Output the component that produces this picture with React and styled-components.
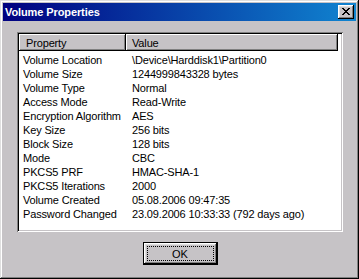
import React from "react";
import styled, { createGlobalStyle } from "styled-components";

const GlobalStyle = createGlobalStyle`
  html, body {
    margin: 0;
    padding: 0;
    background: #c6c3c6;
  }
  * {
    box-sizing: border-box;
  }
`;

const face = "#c6c3c6";

// 창 프레임
const Window = styled.div`
  width: 359px;
  height: 279px;
  padding: 3px;
  background: ${face};
  display: flex;
  flex-direction: column;
  font-family: "Liberation Sans", Arial, sans-serif;
  font-size: 11px;
  color: #000;
  box-shadow: inset -1px -1px #000, inset 1px 1px #dfdfdf,
    inset -2px -2px #808080, inset 2px 2px #fff;
`;

// 제목 표시줄
const TitleBar = styled.div`
  height: 18px;
  display: flex;
  align-items: center;
  padding: 0 2px 0 2px;
  background: linear-gradient(to right, #000080, #1084d0);
`;

const Title = styled.span`
  color: #fff;
  font-weight: 700;
  font-size: 11px;
  line-height: 18px;
  letter-spacing: -0.1px;
`;

const CloseButton = styled.div`
  margin-left: auto;
  width: 16px;
  height: 14px;
  background: ${face};
  display: flex;
  align-items: center;
  justify-content: center;
  box-shadow: inset -1px -1px #000, inset 1px 1px #fff,
    inset -2px -2px #808080, inset 2px 2px #dfdfdf;

  svg {
    display: block;
    margin: 0 0 1px 0;
  }
`;

const Body = styled.div`
  flex: 1;
  display: flex;
  flex-direction: column;
  padding: 11px 13px 0 14px;
`;

// 리스트 뷰
const ListView = styled.div`
  height: 200px;
  padding: 2px;
  background: #fff;
  display: flex;
  flex-direction: column;
  letter-spacing: -0.15px;
  box-shadow: inset 1px 1px #808080, inset -1px -1px #fff,
    inset 2px 2px #000, inset -2px -2px ${face};
`;

const HeaderRow = styled.div`
  display: flex;
  height: 17px;
`;

const HeaderCell = styled.div`
  width: ${(p) => p.$w}px;
  height: 17px;
  padding: 1px 0 0 ${(p) => p.$pad}px;
  line-height: 16px;
  background: ${face};
  box-shadow: inset -1px -1px #000, inset 1px 1px #fff,
    inset -2px -2px #808080;
`;

const Rows = styled.div`
  padding-top: 2px;
`;

const Row = styled.div`
  display: flex;
  height: 14px;
  line-height: 14px;
`;

const Cell = styled.div`
  width: ${(p) => (p.$w ? `${p.$w}px` : "auto")};
  padding-left: ${(p) => p.$pad}px;
  white-space: nowrap;
`;

const Footer = styled.div`
  display: flex;
  justify-content: center;
  padding-top: 10px;
`;

const OkButton = styled.button`
  position: relative;
  width: 75px;
  height: 23px;
  padding: 0;
  border: 1px solid #000;
  background: ${face};
  font-family: inherit;
  font-size: 11px;
  color: #000;
  box-shadow: inset -1px -1px #000, inset 1px 1px #fff,
    inset -2px -2px #808080, inset 2px 2px #dfdfdf;

  &::after {
    content: "";
    position: absolute;
    left: 3px;
    top: 3px;
    right: 3px;
    bottom: 3px;
    border: 1px dotted #000;
  }
`;

const rows = [
  ["Volume Location", "\\Device\\Harddisk1\\Partition0"],
  ["Volume Size", "1244999843328 bytes"],
  ["Volume Type", "Normal"],
  ["Access Mode", "Read-Write"],
  ["Encryption Algorithm", "AES"],
  ["Key Size", "256 bits"],
  ["Block Size", "128 bits"],
  ["Mode", "CBC"],
  ["PKCS5 PRF", "HMAC-SHA-1"],
  ["PKCS5 Iterations", "2000"],
  ["Volume Created", "05.08.2006 09:47:35"],
  ["Password Changed", "23.09.2006 10:33:33 (792 days ago)"],
];

const CloseGlyph = () => (
  <svg width="8" height="7" viewBox="0 0 8 7" shapeRendering="crispEdges">
    <path
      fill="#000"
      d="M0 0h2v1H0zM6 0h2v1H6zM1 1h2v1H1zM5 1h2v1H5zM2 2h4v1H2zM3 3h2v1H3zM2 4h4v1H2zM1 5h2v1H1zM5 5h2v1H5zM0 6h2v1H0zM6 6h2v1H6z"
    />
  </svg>
);

export default function App() {
  return (
    <>
      <GlobalStyle />
      <Window>
        <TitleBar>
          <Title>Volume Properties</Title>
          <CloseButton>
            <CloseGlyph />
          </CloseButton>
        </TitleBar>
        <Body>
          <ListView>
            <HeaderRow>
              <HeaderCell $w={107} $pad={7}>Property</HeaderCell>
              <HeaderCell $w={212} $pad={6}>Value</HeaderCell>
            </HeaderRow>
            <Rows>
              {rows.map(([k, v]) => (
                <Row key={k}>
                  <Cell $w={107} $pad={4}>{k}</Cell>
                  <Cell $pad={6}>{v}</Cell>
                </Row>
              ))}
            </Rows>
          </ListView>
          <Footer>
            <OkButton>OK</OkButton>
          </Footer>
        </Body>
      </Window>
    </>
  );
}
